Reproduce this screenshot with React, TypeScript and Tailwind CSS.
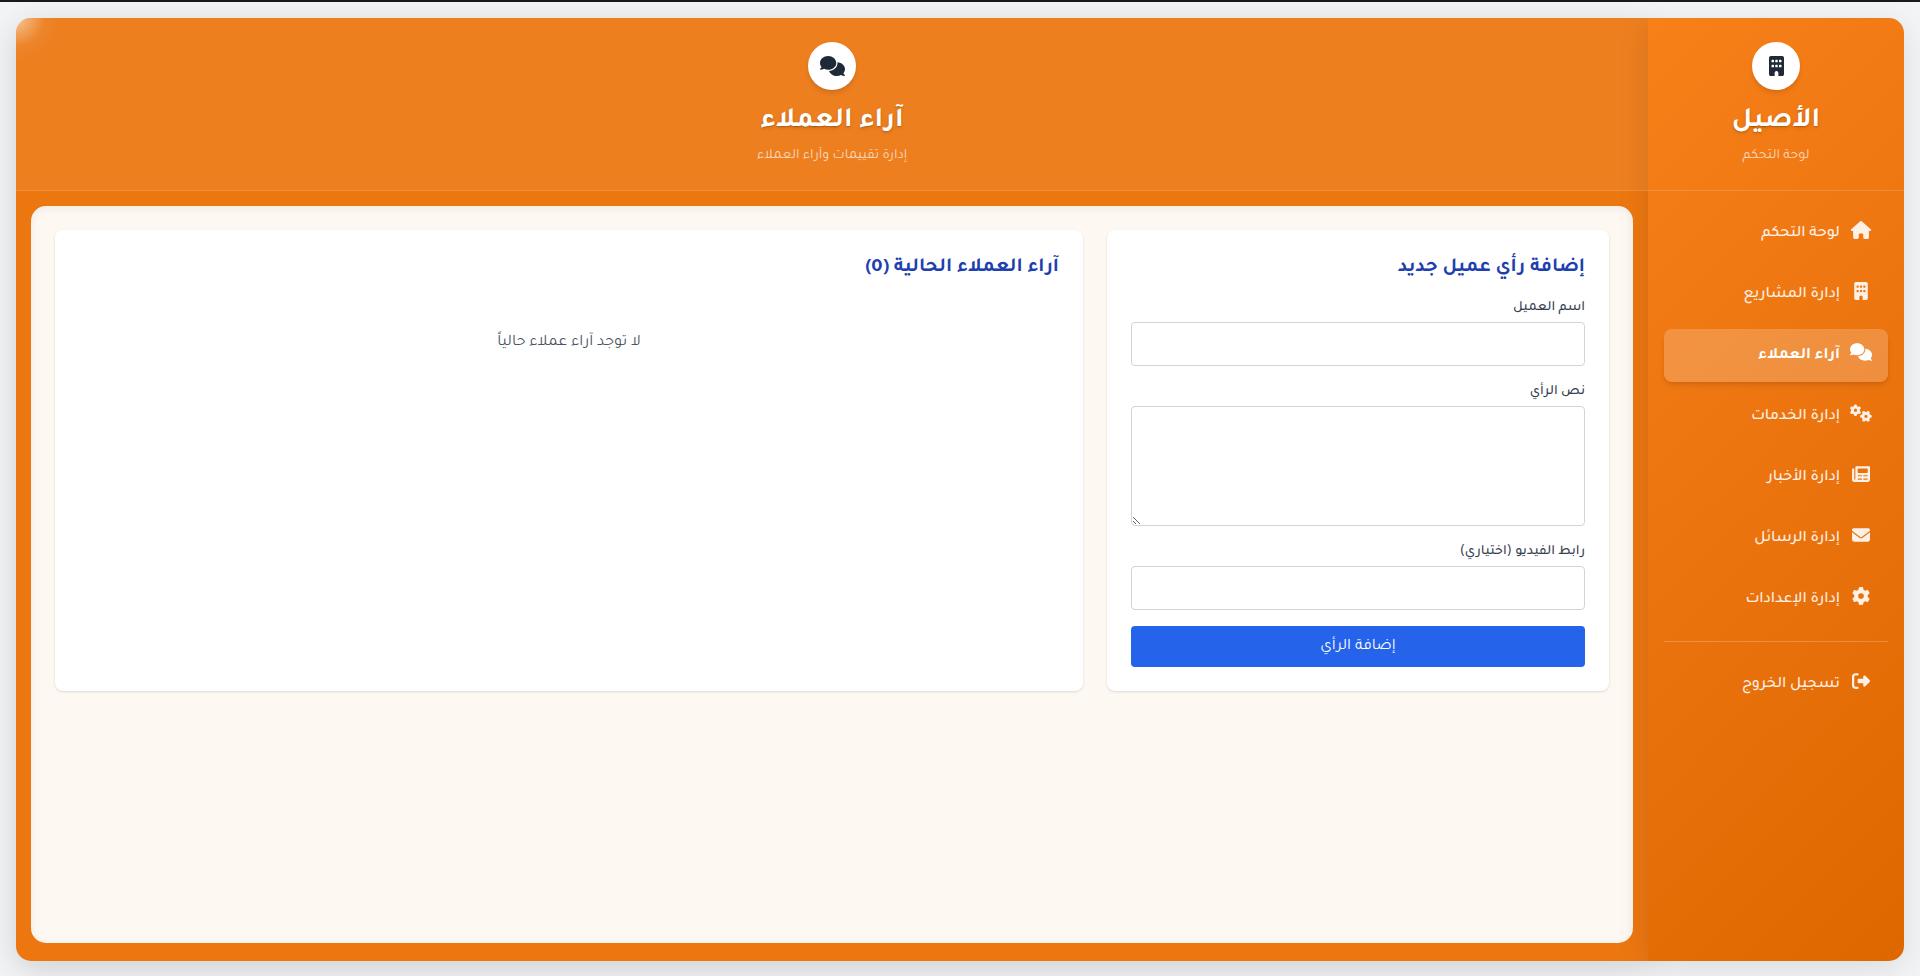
import type { ComponentType } from "react";
import {
  FaBuilding,
  FaComments,
  FaEnvelope,
  FaGear,
  FaGears,
  FaHouse,
  FaRightFromBracket,
} from "react-icons/fa6";
import clsx from "clsx";

type Icon = ComponentType<{ className?: string }>;

type NavItem = {
  label: string;
  icon: Icon;
  href: string;
  active?: boolean;
};

// newspaper with the photo on top and two columns of text below
function NewspaperIcon({ className }: { className?: string }) {
  return (
    <svg viewBox="0 0 512 512" fill="currentColor" aria-hidden="true" className={className}>
      <path
        fillRule="evenodd"
        d="M480 32H128c-17.700 0-32 14.300-32 32v336c0 8.800-7.200 16-16 16s-16-7.200-16-16V96H32c-17.700 0-32 14.300-32 32v288c0 35.300 28.700 64 64 64h384c35.300 0 64-28.700 64-64V64c0-17.700-14.300-32-32-32zM272 416h-96a16 16 0 0 1 0-32h96a16 16 0 0 1 0 32zm0-96h-96a16 16 0 0 1 0-32h96a16 16 0 0 1 0 32zm160 96h-96a16 16 0 0 1 0-32h96a16 16 0 0 1 0 32zm0-96h-96a16 16 0 0 1 0-32h96a16 16 0 0 1 0 32zm16-112c0 8.800-7.200 16-16 16H176c-8.800 0-16-7.200-16-16v-96c0-8.800 7.200-16 16-16h256c8.800 0 16 7.200 16 16v96z"
      />
    </svg>
  );
}

const NAV: NavItem[] = [
  { label: "لوحة التحكم", icon: FaHouse, href: "#dashboard" },
  { label: "إدارة المشاريع", icon: FaBuilding, href: "#projects" },
  { label: "آراء العملاء", icon: FaComments, href: "#testimonials", active: true },
  { label: "إدارة الخدمات", icon: FaGears, href: "#services" },
  { label: "إدارة الأخبار", icon: NewspaperIcon, href: "#news" },
  { label: "إدارة الرسائل", icon: FaEnvelope, href: "#messages" },
  { label: "إدارة الإعدادات", icon: FaGear, href: "#settings" },
];

const LABEL = "mb-1 block text-sm leading-5 font-medium text-[#374151]";
const FIELD = "block w-full rounded-sm border border-[#d1d5db] bg-white px-3 outline-none focus:border-[#2563eb]";

function NavLink({ label, icon: Icon, href, active }: NavItem) {
  return (
    <a
      href={href}
      aria-current={active ? "page" : undefined}
      className={clsx(
        "flex h-[53px] items-center gap-3 rounded-lg px-4 text-base",
        active ? "bg-white/20 font-bold text-white shadow-md" : "font-medium text-white/90 hover:bg-white/10",
      )}
    >
      <span className="flex w-5 shrink-0 pb-2">
        {/* wide box: some glyphs are broader than they are tall */}
        <Icon className="h-[18px] w-[22px] shrink-0" />
      </span>
      {label}
    </a>
  );
}

function Banner({ icon: Icon, title, subtitle, as: Title }: {
  icon: Icon;
  title: string;
  subtitle: string;
  as: "h1" | "h2";
}) {
  return (
    <div className="flex h-[172px] flex-col items-center pt-6 text-center">
      <span className="flex size-12 shrink-0 items-center justify-center rounded-full bg-white text-[#1f2937] shadow-md">
        <Icon className="h-5 w-[25px]" />
      </span>
      <Title className="mt-3 text-[28px] leading-10 font-bold text-white text-shadow-md">{title}</Title>
      <p className="mt-1 text-sm leading-5 text-white/70">{subtitle}</p>
    </div>
  );
}

export default function App() {
  return (
    <div
      dir="rtl"
      lang="ar"
      className="flex min-h-screen flex-col border-t-2 border-[#1a1a1a] bg-[#f3f4f6] font-[Tajawal,'Noto_Sans_Arabic','DejaVu_Sans',sans-serif]"
    >
      <div className="flex flex-1 px-4 pt-4 pb-[15px]">
        <aside className="relative z-10 w-64 shrink-0 rounded-r-[15px] bg-linear-135 from-[#f78019] to-[#df6700] shadow-[0_8px_32px_rgba(0,0,0,0.1)]">
          <div className="border-b border-white/15">
            <Banner as="h2" icon={FaBuilding} title="الأصيل" subtitle="لوحة التحكم" />
          </div>
          <nav className="flex flex-col gap-2 p-4">
            {NAV.map((item) => (
              <NavLink key={item.href} {...item} />
            ))}
            <div className="mt-[7px] border-t border-white/20 pt-4">
              <NavLink label="تسجيل الخروج" icon={FaRightFromBracket} href="#logout" />
            </div>
          </nav>
        </aside>

        <main className="flex min-w-0 flex-1 flex-col rounded-l-[15px] bg-[#ec7711] shadow-[0_8px_32px_rgba(0,0,0,0.15)]">
          <header className="rounded-tl-[15px] border-b border-white/15 bg-white/6 bg-[radial-gradient(circle_at_0_0,rgba(255,255,255,0.55),rgba(255,255,255,0.06)_28px,transparent_44px)] bg-origin-border bg-no-repeat">
            <Banner
              as="h1"
              icon={FaComments}
              title="آراء العملاء"
              subtitle="إدارة تقييمات وآراء العملاء"
            />
          </header>

          <div className="mx-[15px] mt-[15px] mb-[18px] flex-1 rounded-[15px] bg-[#fdf8f1] p-6 shadow-[inset_0_2px_10px_rgba(0,0,0,0.06)]">
            <div className="grid grid-cols-3 gap-6">
              <section className="rounded-lg bg-white p-6 shadow">
                <h2 className="mb-4 text-xl leading-7 font-bold text-[#1e40af]">إضافة رأي عميل جديد</h2>
                <form className="flex flex-col gap-4">
                  <div>
                    <label htmlFor="client-name" className={LABEL}>
                      اسم العميل
                    </label>
                    <input id="client-name" type="text" className={clsx(FIELD, "h-11")} />
                  </div>
                  <div>
                    <label htmlFor="client-opinion" className={LABEL}>
                      نص الرأي
                    </label>
                    <textarea id="client-opinion" className={clsx(FIELD, "h-[120px] resize py-2")} />
                  </div>
                  <div>
                    <label htmlFor="client-video" className={LABEL}>
                      رابط الفيديو (اختياري)
                    </label>
                    <input id="client-video" type="url" className={clsx(FIELD, "h-11")} />
                  </div>
                  <button type="button" className="h-[41px] rounded-sm bg-[#2563eb] text-base text-white hover:bg-[#1d4ed8]">
                    إضافة الرأي
                  </button>
                </form>
              </section>

              <section className="col-span-2 rounded-lg bg-white p-6 shadow">
                <h2 className="text-xl leading-7 font-bold text-[#1e40af]">آراء العملاء الحالية (0)</h2>
                <p className="mt-11 text-center text-base leading-[34px] text-[#4b5563]">لا توجد آراء عملاء حالياً</p>
              </section>
            </div>
          </div>
        </main>
      </div>
    </div>
  );
}
